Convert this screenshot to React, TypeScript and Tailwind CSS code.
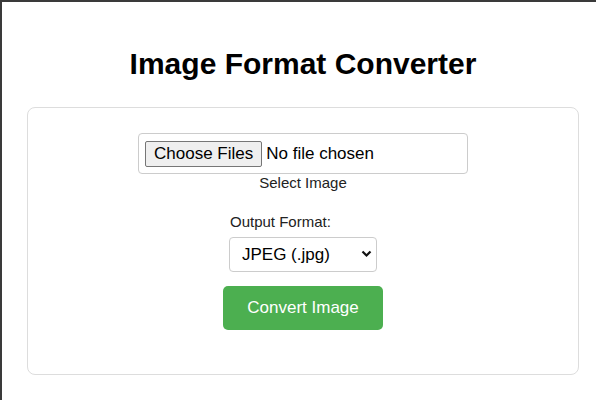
const App = () => {
  return (
    <div className="min-h-[400px] w-[596px] bg-white border-t-2 border-l-2 border-[#3a3a3a] font-['Liberation_Sans',Arial,sans-serif] text-black">
      <div className="pl-[25px] pr-[17px] pt-[45px]">
        <h1 className="text-center text-[30px] font-bold leading-[34px]">Image Format Converter</h1>
        <div className="mt-[26px] h-[268px] rounded-lg border border-[#dddddd] pt-[25px]">
          <div className="flex flex-col items-center">
            <label className="flex h-[41px] w-[330px] cursor-pointer items-center gap-1 rounded border border-[#cccccc] px-[6px]">
              <input type="file" accept="image/*" className="hidden" />
              <span className="flex h-[26px] items-center rounded-[2px] border border-[#767676] bg-[#efefef] px-[8px] text-[17px]">
                Choose Files
              </span>
              <span className="text-[17px]">No file chosen</span>
            </label>
            <span className="text-[15px] leading-[17px] text-[#222]">Select Image</span>
          </div>

          <div className="mt-[22px] flex flex-col items-center">
            <div className="flex w-[148px] flex-col">
              <span className="pl-[1px] text-[15px] leading-[17px] text-[#222]">Output Format:</span>
              <div className="relative mt-[7px]">
                <select className="h-[35px] w-[148px] appearance-none rounded border border-[#cccccc] bg-white pl-[12px] text-[17px]">
                  <option>JPEG (.jpg)</option>
                  <option>PNG (.png)</option>
                  <option>WEBP (.webp)</option>
                </select>
                <svg
                  className="pointer-events-none absolute right-[5px] top-[13px]"
                  width="11"
                  height="8"
                  viewBox="0 0 11 8"
                  fill="none"
                >
                  <path d="M1.5 1.5 L5.5 5.5 L9.5 1.5" stroke="#111" strokeWidth="2.2" />
                </svg>
              </div>
            </div>
            <button className="mt-[14px] h-[44px] w-[160px] rounded-[5px] bg-[#4caf50] text-[17px] text-white">
              Convert Image
            </button>
          </div>
        </div>
      </div>
    </div>
  );
};

export default App;
